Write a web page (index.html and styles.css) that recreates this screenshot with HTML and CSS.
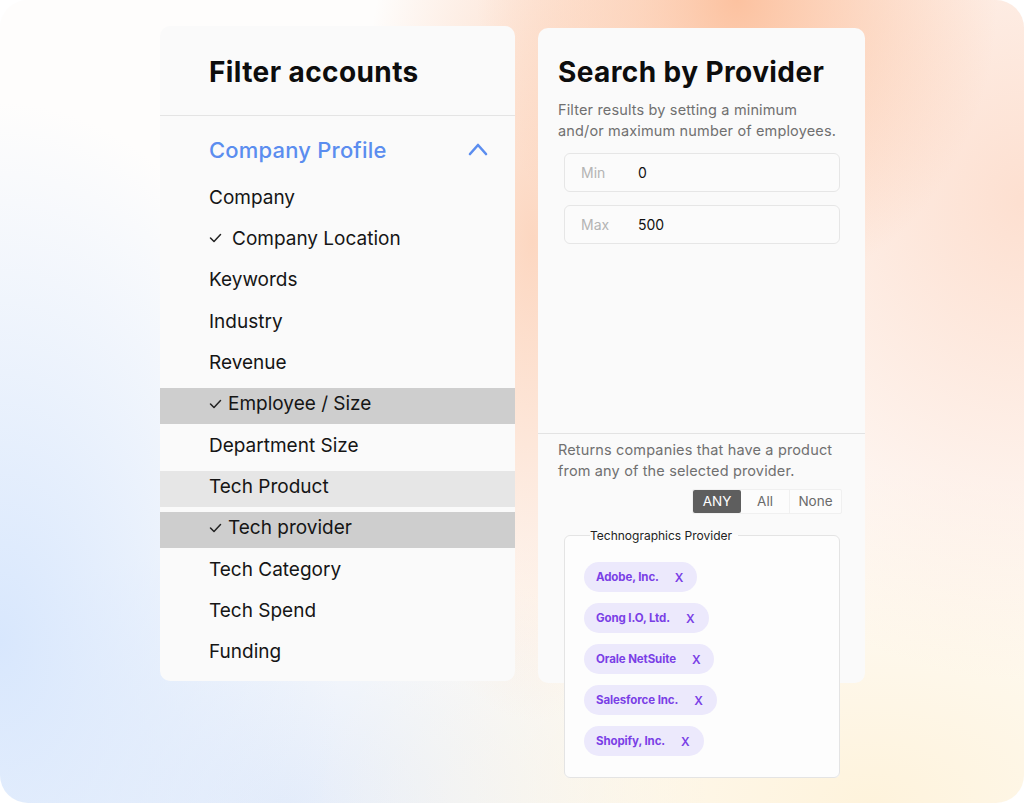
FILE: index.html
```html
<!DOCTYPE html>
<html lang="en">
<head>
<meta charset="utf-8">
<title>Filter accounts</title>
<link rel="stylesheet" href="styles.css">
</head>
<body>
<div class="frame">
  <section class="card filters">
    <header class="filters-head">
      <h1 class="title">Filter accounts</h1>
    </header>
    <div class="group-head">
      <span class="group-name">Company Profile</span>
      <svg class="chevron" width="20" height="14" viewBox="0 0 20 14"><polyline points="2,12 10,3 18,12" fill="none" stroke="#5b8def" stroke-width="2.6" stroke-linecap="round" stroke-linejoin="round"/></svg>
    </div>
    <ul class="items">
      <li class="item">Company</li>
      <li class="item checked"><svg class="check" width="13" height="10" viewBox="0 0 13 10"><polyline points="1.5,5 5,8.5 11.5,1.5" fill="none" stroke="#222" stroke-width="1.5" stroke-linecap="round" stroke-linejoin="round"/></svg>Company Location</li>
      <li class="item">Keywords</li>
      <li class="item">Industry</li>
      <li class="item">Revenue</li>
      <li class="item checked active"><svg class="check" width="13" height="10" viewBox="0 0 13 10"><polyline points="1.5,5 5,8.5 11.5,1.5" fill="none" stroke="#222" stroke-width="1.5" stroke-linecap="round" stroke-linejoin="round"/></svg>Employee / Size</li>
      <li class="item">Department Size</li>
      <li class="item hover">Tech Product</li>
      <li class="item checked active"><svg class="check" width="13" height="10" viewBox="0 0 13 10"><polyline points="1.5,5 5,8.5 11.5,1.5" fill="none" stroke="#222" stroke-width="1.5" stroke-linecap="round" stroke-linejoin="round"/></svg>Tech provider</li>
      <li class="item">Tech Category</li>
      <li class="item">Tech Spend</li>
      <li class="item">Funding</li>
    </ul>
  </section>

  <section class="card provider">
    <div class="provider-top">
      <h1 class="title">Search by Provider</h1>
      <p class="hint">Filter results by setting a minimum<br>and/or maximum number of employees.</p>
      <label class="field"><span class="field-label">Min</span><span class="field-value">0</span></label>
      <label class="field"><span class="field-label">Max</span><span class="field-value">500</span></label>
    </div>
    <div class="provider-bottom">
      <p class="hint">Returns companies that have a product<br>from any of the selected provider.</p>
      <div class="toggle-row">
        <div class="toggle">
          <span class="opt on">ANY</span>
          <span class="opt">All</span>
          <span class="opt">None</span>
        </div>
      </div>
      <fieldset class="tech-box">
        <legend>Technographics Provider</legend>
        <div class="chips">
          <span class="chip">Adobe, Inc.<b>X</b></span>
          <span class="chip">Gong I.O, Ltd.<b>X</b></span>
          <span class="chip">Orale NetSuite<b>X</b></span>
          <span class="chip">Salesforce Inc.<b>X</b></span>
          <span class="chip">Shopify, Inc.<b>X</b></span>
        </div>
      </fieldset>
    </div>
  </section>
</div>
</body>
</html>
```

FILE: styles.css
```css
* { box-sizing: border-box; }

html, body {
  margin: 0;
  padding: 0;
  background: #ffffff;
}

body {
  font-family: Inter, "Open Sans", "Liberation Sans", sans-serif;
  color: #111;
}

.frame {
  width: 1024px;
  height: 803px;
  border-radius: 28px;
  overflow: hidden;
  display: flex;
  align-items: flex-start;
  gap: 23px;
  padding: 26px 0 0 160px;
  background:
    radial-gradient(ellipse 260px 300px at 72% 0%, rgba(252, 194, 160, 1), rgba(252, 194, 160, 0) 100%),
    radial-gradient(ellipse 180px 480px at 52% 30%, rgba(252, 208, 182, 0.85), rgba(252, 208, 182, 0) 100%),
    radial-gradient(ellipse 420px 480px at 100% 25%, rgba(253, 222, 206, 0.95), rgba(253, 222, 206, 0) 100%),
    radial-gradient(ellipse 560px 330px at 85% 100%, rgba(254, 243, 220, 1), rgba(254, 243, 220, 0) 100%),
    radial-gradient(ellipse 340px 540px at 0% 80%, rgba(216, 231, 253, 1), rgba(216, 231, 253, 0) 100%),
    radial-gradient(ellipse 420px 260px at 28% 100%, rgba(226, 235, 250, 0.9), rgba(226, 235, 250, 0) 100%),
    #fefdfc;
}

.card {
  background: #fafafa;
  border-radius: 10px;
}

.title {
  margin: 0;
  font-size: 28px;
  font-weight: 700;
  line-height: 34px;
  letter-spacing: 0.4px;
  color: #0d0d0d;
}

/* left: filter list */
.filters {
  width: 355px;
  height: 655px;
}

.filters-head {
  padding: 29px 0 26px 49px;
  border-bottom: 1px solid #e4e4e4;
}

.group-head {
  display: flex;
  align-items: center;
  justify-content: space-between;
  padding: 18px 27px 15px 49px;
  height: 65px;
}

.group-name {
  font-size: 22px;
  line-height: 32px;
  letter-spacing: 0.2px;
  color: #5b8def;
  font-weight: 500;
}

.chevron { display: block; margin-top: -2px; }

.items {
  list-style: none;
  margin: 0;
  padding: 0;
}

.item {
  display: flex;
  align-items: center;
  height: 36px;
  margin-bottom: 5.36px;
  padding: 0 0 4px 49px;
  font-size: 19px;
  color: #151515;
}

.item .check { margin: 0 10px 0 0; }

.item.active { background: #cecece; }
.item.hover { background: #e6e6e6; }
.item.active .check { margin-right: 6px; }

/* right: provider search */
.provider {
  width: 327px;
  height: 655px;
  margin-top: 2px;
  display: flex;
  flex-direction: column;
}

.provider-top {
  flex: 0 0 406px;
  padding: 27px 20px 0 20px;
  border-bottom: 1px solid #e3e3e3;
}

.hint {
  margin: 0;
  font-size: 14.5px;
  line-height: 21px;
  letter-spacing: 0.15px;
  color: #707070;
}

.provider-top .hint { margin: 10px 0 12px; }

.field {
  display: flex;
  align-items: center;
  width: 276px;
  height: 39px;
  margin: 0 0 13px 6px;
  padding-left: 16px;
  border: 1px solid #e6e6e6;
  border-radius: 6px;
  background: #fbfbfb;
  font-size: 14px;
}

.field-label {
  width: 57px;
  color: #b4b4b4;
}

.field-value { color: #111; }

.provider-bottom {
  padding: 5px 23px 0 20px;
}

.toggle-row {
  display: flex;
  justify-content: flex-end;
  margin-top: 8px;
}

.toggle {
  display: flex;
  border: 1px solid #f0f0f0;
  border-radius: 2px;
  background: #fcfcfc;
}

.opt {
  height: 23px;
  line-height: 23px;
  text-align: center;
  font-size: 13.5px;
  color: #6a6a6a;
  width: 48px;
}

.opt:last-child { width: 52px; border-left: 1px solid #f0f0f0; }

.opt.on {
  background: #5e5e5e;
  color: #fff;
  border-radius: 2px;
}

.tech-box {
  width: 276px;
  height: 250px;
  margin: 14px 0 0 6px;
  padding: 19px 0 0 19px;
  border: 1px solid #e4e4e4;
  border-radius: 6px;
  background: #fdfdfd;
}

.tech-box legend {
  margin-left: 6px;
  padding: 0 6px 0 0;
  font-size: 12px;
  color: #222;
}

.chips {
  display: flex;
  flex-direction: column;
  align-items: flex-start;
  gap: 11px;
}

.chip {
  display: inline-flex;
  align-items: center;
  height: 30px;
  padding: 0 14px 0 12px;
  border-radius: 15px;
  background: #ece9fc;
  color: #7a3fe6;
  font-size: 11.5px;
  font-weight: 700;
  letter-spacing: -0.1px;
}

.chip b {
  margin-left: 16px;
  font-weight: 600;
  font-size: 12px;
}
```
